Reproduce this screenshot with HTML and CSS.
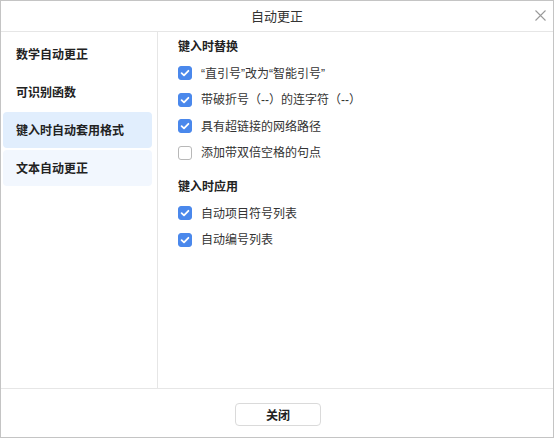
FILE: index.html
```html
<!DOCTYPE html>
<html lang="zh-CN">
<head>
<meta charset="utf-8">
<title>自动更正</title>
<link rel="stylesheet" href="styles.css">
</head>
<body>
<div class="dialog">
  <div class="titlebar">
    <div class="title">自动更正</div>
    <button class="close" aria-label="关闭">
      <svg width="11" height="11" viewBox="0 0 11 11"><path d="M0.5 0.5L10.5 10.5M10.5 0.5L0.5 10.5" stroke="#9a9a9a" stroke-width="1.1" fill="none"/></svg>
    </button>
  </div>
  <div class="main">
    <div class="sidebar">
      <div class="nav-item">数学自动更正</div>
      <div class="nav-item">可识别函数</div>
      <div class="nav-item active">键入时自动套用格式</div>
      <div class="nav-item hover">文本自动更正</div>
    </div>
    <div class="content">
      <div class="group">
        <div class="heading">键入时替换</div>
        <label class="row"><span class="cb checked"><svg width="14" height="14" viewBox="0 0 14 14"><path d="M3.6 7.2L6 9.4L10.4 4.8" stroke="#fff" stroke-width="1.8" fill="none" stroke-linecap="round" stroke-linejoin="round"/></svg></span><span class="label">“直引号”改为“智能引号”</span></label>
        <label class="row"><span class="cb checked"><svg width="14" height="14" viewBox="0 0 14 14"><path d="M3.6 7.2L6 9.4L10.4 4.8" stroke="#fff" stroke-width="1.8" fill="none" stroke-linecap="round" stroke-linejoin="round"/></svg></span><span class="label">带破折号（--）的连字符（--）</span></label>
        <label class="row"><span class="cb checked"><svg width="14" height="14" viewBox="0 0 14 14"><path d="M3.6 7.2L6 9.4L10.4 4.8" stroke="#fff" stroke-width="1.8" fill="none" stroke-linecap="round" stroke-linejoin="round"/></svg></span><span class="label">具有超链接的网络路径</span></label>
        <label class="row"><span class="cb"></span><span class="label">添加带双倍空格的句点</span></label>
      </div>
      <div class="group second">
        <div class="heading">键入时应用</div>
        <label class="row"><span class="cb checked"><svg width="14" height="14" viewBox="0 0 14 14"><path d="M3.6 7.2L6 9.4L10.4 4.8" stroke="#fff" stroke-width="1.8" fill="none" stroke-linecap="round" stroke-linejoin="round"/></svg></span><span class="label">自动项目符号列表</span></label>
        <label class="row"><span class="cb checked"><svg width="14" height="14" viewBox="0 0 14 14"><path d="M3.6 7.2L6 9.4L10.4 4.8" stroke="#fff" stroke-width="1.8" fill="none" stroke-linecap="round" stroke-linejoin="round"/></svg></span><span class="label">自动编号列表</span></label>
      </div>
    </div>
  </div>
  <div class="footer">
    <button class="btn">关闭</button>
  </div>
</div>
</body>
</html>
```

FILE: styles.css
```css
* { box-sizing: border-box; }
html, body { margin: 0; padding: 0; background: #fff; }
body {
  font-family: "Liberation Sans", "Noto Sans CJK SC", sans-serif;
  font-size: 12px;
  color: #333;
}
.dialog {
  width: 554px;
  height: 438px;
  border: 1px solid #c4c4c4;
  display: flex;
  flex-direction: column;
  background: #fff;
}
.titlebar {
  height: 31px;
  flex: none;
  border-bottom: 1px solid #e6e6e6;
  display: flex;
  align-items: center;
  justify-content: center;
  position: relative;
}
.title {
  font-size: 13px;
  color: #333;
  line-height: 20px;
  padding-top: 1px;
}
.close {
  position: absolute;
  right: 6px;
  top: 8px;
  width: 13px;
  height: 13px;
  padding: 1px;
  border: 0;
  background: transparent;
  display: flex;
}
.main {
  flex: 1;
  display: flex;
  min-height: 0;
}
.sidebar {
  width: 157px;
  flex: none;
  border-right: 1px solid #e6e6e6;
  padding: 4px 5px 0 2px;
  display: flex;
  flex-direction: column;
  gap: 2px;
}
.nav-item {
  height: 36px;
  line-height: 34px;
  padding: 2px 0 0 13px;
  border-radius: 4px;
  font-weight: bold;
  color: #222;
}
.nav-item.active { background: #e1eefd; }
.nav-item.hover { background: #f2f7fe; }
.content {
  flex: 1;
  padding: 5px 0 0 20px;
}
.heading {
  line-height: 20px;
  font-weight: bold;
  color: #222;
  margin-bottom: 3px;
}
.group.second { margin-top: 11px; }
.row {
  height: 26.5px;
  display: flex;
  align-items: center;
}
.cb {
  width: 14px;
  height: 14px;
  border-radius: 3px;
  border: 1px solid #b8b8b8;
  background: #fff;
  flex: none;
  display: flex;
  align-items: center;
  justify-content: center;
}
.cb.checked {
  background: #4a88ec;
  border-color: #4a88ec;
}
.cb svg { flex: none; margin: -1px; }
.label {
  margin-left: 9px;
  color: #333;
  line-height: 16px;
  padding-top: 1px;
}
.footer {
  height: 49px;
  flex: none;
  border-top: 1px solid #e6e6e6;
  display: flex;
  justify-content: center;
  padding-top: 14px;
  padding-left: 2px;
}
.btn {
  width: 86px;
  height: 23px;
  border: 1px solid #dadada;
  border-radius: 4px;
  background: #fff;
  font-family: inherit;
  font-size: 12px;
  font-weight: bold;
  color: #222;
  padding: 0;
}
```
